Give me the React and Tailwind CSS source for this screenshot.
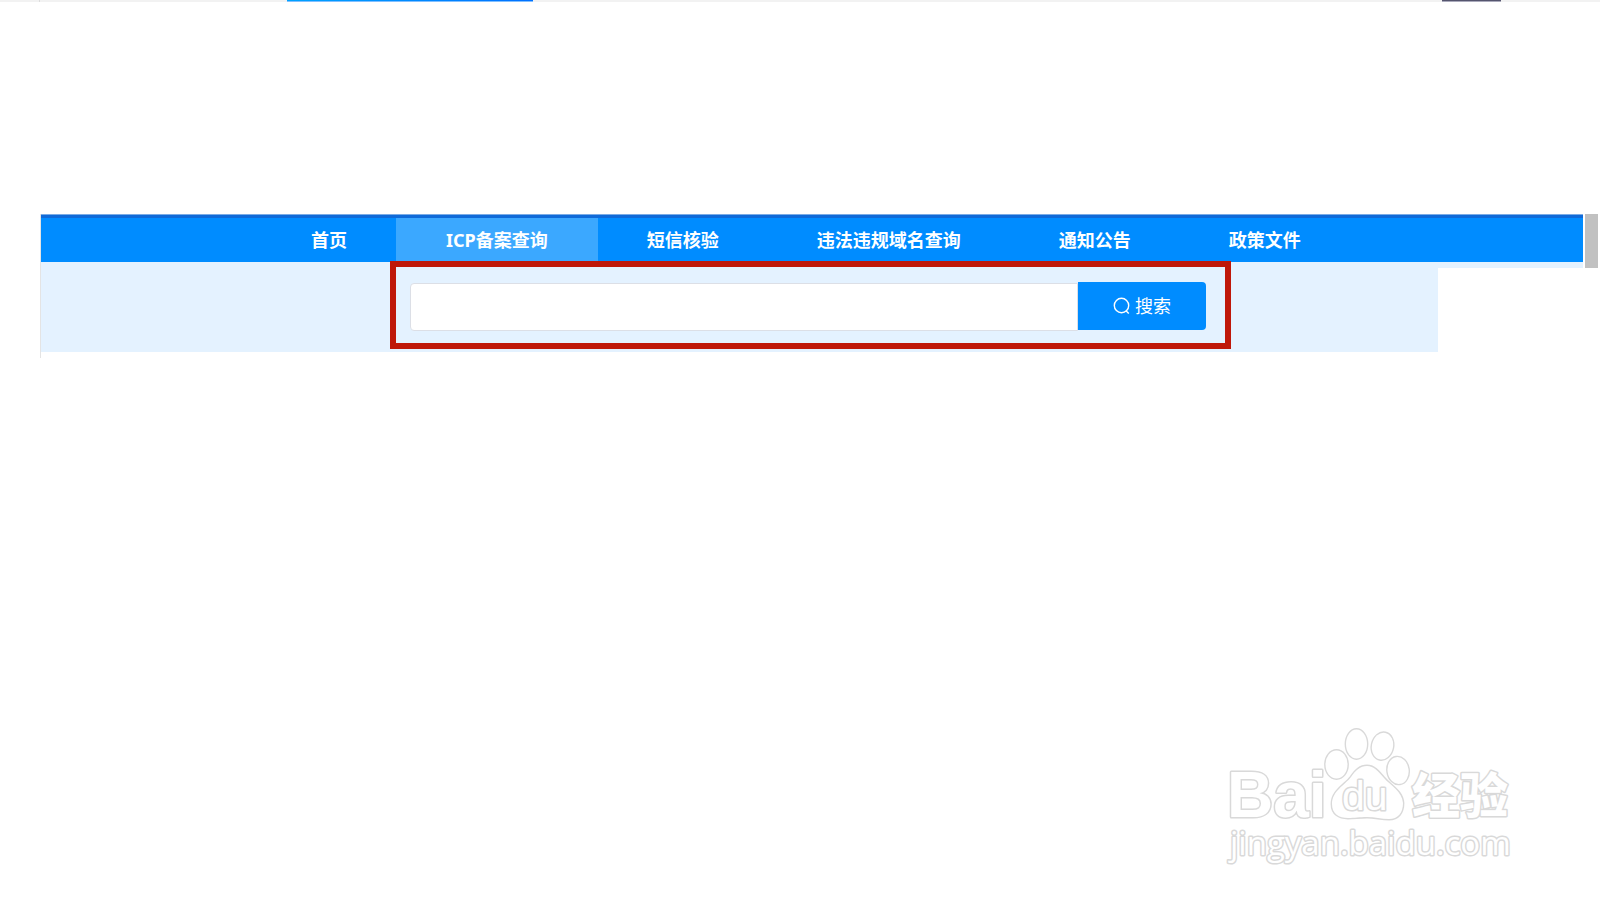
import React from "react";

const navItems = [
  { label: "首页" },
  { label: "ICP备案查询", active: true },
  { label: "短信核验" },
  { label: "违法违规域名查询" },
  { label: "通知公告" },
  { label: "政策文件" },
];

function TopStrip() {
  return (
    <div className="flex h-0.5 bg-[#f2f2f2]">
      <div className="w-10 border-r border-[#dcdcdc]" />
      <div className="ml-[247px] w-[246px] border-b border-[#80bfff] bg-linear-to-r from-[#00a2ff] to-[#0070ff]" />
      <div className="mr-[99px] ml-auto w-[59px] border-b border-[#a9a9bb] bg-[#55556e]" />
    </div>
  );
}

function NavBar() {
  return (
    <nav className="flex h-12 flex-col bg-[#008cff]">
      <div className="h-1 border-t border-[#79abe6] bg-[#106ad8]" />
      <ul className="flex flex-1 pl-[221px]">
        {navItems.map((item) => (
          <li key={item.label} className="flex">
            <a
              href="#"
              className={
                item.active
                  ? "flex items-center bg-[#3ba8ff] px-[50px] text-lg leading-6 font-bold text-white"
                  : "flex items-center px-[49px] text-lg leading-6 font-bold text-white"
              }
            >
              {item.label}
            </a>
          </li>
        ))}
      </ul>
    </nav>
  );
}

function SearchIcon() {
  return (
    <svg width="18" height="18" viewBox="0 0 18 18" fill="none" stroke="currentColor" strokeWidth="1.4" aria-hidden="true">
      <circle cx="8.5" cy="8.5" r="7.2" />
      <path d="M13.2 14 L15.8 16.600" />
    </svg>
  );
}

function SearchPanel() {
  return (
    <section className="flex flex-col bg-[#e4f2ff]">
      <div className="h-1.5" />
      <div className="flex bg-white">
        <div className="flex h-[84px] flex-1 bg-[#e4f2ff] pl-[369px]">
          <form className="relative mt-3.5 flex h-12 w-[796px]" onSubmit={(e) => e.preventDefault()}>
            <input
              type="text"
              aria-label="备案查询"
              className="mt-px h-12 min-w-0 flex-1 rounded-l border border-[#dcdfe6] bg-white px-4 text-lg outline-none"
            />
            <button
              type="submit"
              className="flex h-12 w-32 items-center justify-center gap-1 rounded-r bg-[#008cff] text-lg text-white"
            >
              <SearchIcon />
              搜索
            </button>
            <div className="pointer-events-none absolute -top-[21px] -right-[25px] -bottom-[19px] -left-5 border-6 border-[#bf180a]" />
          </form>
        </div>
        <div className="w-[145px]" />
      </div>
    </section>
  );
}

function Watermark() {
  return (
    <svg
      width="320"
      height="170"
      viewBox="0 0 320 170"
      className="absolute right-[70px] bottom-5"
      fill="#fff"
      stroke="#d9d9d9"
      strokeLinejoin="round"
      strokeWidth="3"
      paintOrder="stroke"
    >
      <text x="17" y="107" fontFamily="Liberation Sans, sans-serif" fontWeight="700" fontSize="64">Bai</text>
      <g strokeWidth="2.8">
        <ellipse cx="126.500" cy="54.500" rx="11" ry="14" />
        <ellipse cx="146.500" cy="34" rx="10.500" ry="14.500" />
        <ellipse cx="172.500" cy="36" rx="10.500" ry="13.500" transform="rotate(12 172 36)" />
        <ellipse cx="188" cy="60.500" rx="10.500" ry="13.500" transform="rotate(-8 188 60)" />
        <path d="M157 56 C150 56 146 60 141 67 C135 75 122 81 122 94 C122 104 129 108 138 108 C145 108 149 107 157 107 C165 107 171 109 179 109 C188 109 193 103 193 93 C192 81 181 76 174 68 C168 61 164 56 157 56 Z" />
      </g>
      <text x="132" y="100" fontFamily="Liberation Sans, sans-serif" fontSize="41">du</text>
      <text x="202" y="103" fontFamily="Noto Sans CJK SC, sans-serif" fontWeight="900" fontSize="48">经验</text>
      <text x="20" y="145" fontFamily="Open Sans, sans-serif" fontSize="33">jingyan.baidu.com</text>
    </svg>
  );
}

export default function App() {
  return (
    <div className="relative min-h-screen bg-white font-['Noto_Sans','Noto_Sans_CJK_SC',sans-serif]">
      <TopStrip />
      <main className="flex pt-[212px] pl-10">
        <div className="min-w-0 flex-1 border-l border-[#e4e4e4] pb-1.5">
          <NavBar />
          <SearchPanel />
        </div>
        <div className="mx-0.5 h-[54px] w-[13px] bg-[#c1c1c1]" />
      </main>
      <Watermark />
    </div>
  );
}
